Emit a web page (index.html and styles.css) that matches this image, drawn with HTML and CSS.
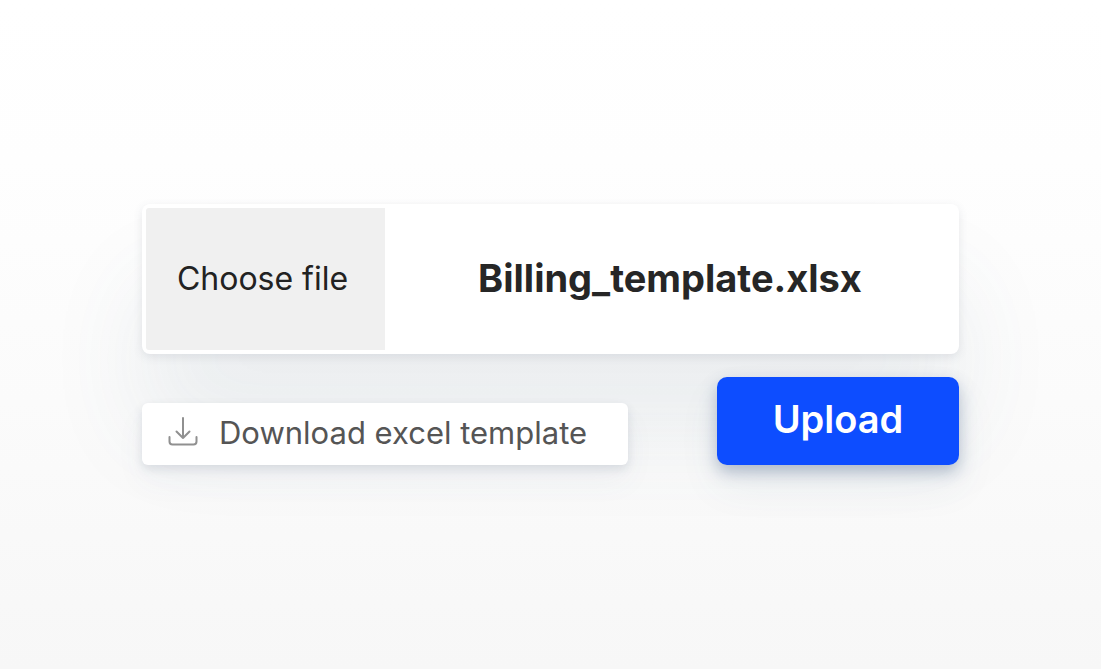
FILE: index.html
```html
<!DOCTYPE html>
<html lang="en">
<head>
<meta charset="utf-8">
<meta name="viewport" content="width=device-width, initial-scale=1">
<title>Upload billing file</title>
<link rel="stylesheet" href="styles.css">
</head>
<body>
<main class="page">
  <form class="uploader">
    <div class="file-field">
      <button class="choose" type="button">Choose file</button>
      <output class="file-name">Billing_template.xlsx</output>
    </div>
    <div class="actions">
      <a class="download" href="#template">
        <svg class="download-icon" viewBox="0 0 30 30" aria-hidden="true"><path d="M15 0v20M8.500 13.500l6.500 6.500 6.500-6.500M1.500 19v4.500q0 3 3 3h21q3 0 3-3v-4.500"/></svg>
        <span>Download excel template</span>
      </a>
      <button class="upload" type="submit">Upload</button>
    </div>
  </form>
</main>
</body>
</html>
```
FILE: styles.css
```css
* { box-sizing: border-box; }
body {
  margin: 0;
  font-family: Inter, "Liberation Sans", sans-serif;
  color: #262626;
}
.page {
  min-height: 100vh;
  padding: 204px 142px 40px;
  background: linear-gradient(#fff 0%, #fefefe 24%, #fbfbfb 60%, #f7f7f7 100%);
}
.uploader {
  display: flex;
  flex-direction: column;
  gap: 23px;
}
.file-field {
  display: flex;
  height: 150px;
  padding: 4px;
  border-radius: 8px;
  background: #fff;
  box-shadow: 0 3px 10px rgba(70, 85, 110, .12), 0 80px 100px rgba(70, 100, 120, .09);
}
.choose {
  width: 239px;
  padding: 0 6px 0 0;
  border: 0;
  border-radius: 3px 0 0 3px;
  background: #f0f0f0;
  color: #222;
  font: 400 32px/40px Inter, "Liberation Sans", sans-serif;
}
.file-name {
  flex: 1;
  align-self: center;
  padding-bottom: 2px;
  text-align: center;
  font-size: 38px;
  line-height: 46px;
  font-weight: 700;
}
.actions {
  display: flex;
  justify-content: space-between;
  align-items: flex-end;
}
.download {
  display: flex;
  align-items: center;
  gap: 21px;
  height: 62px;
  padding: 0 41px 2px 26px;
  border-radius: 6px;
  background: #fff;
  box-shadow: 0 4px 10px rgba(70, 85, 110, .14), 0 16px 30px rgba(70, 100, 130, .05);
  color: #555;
  font-size: 31px;
  line-height: 38px;
  text-decoration: none;
  white-space: nowrap;
}
.download-icon {
  width: 30px;
  height: 30px;
  overflow: visible;
  fill: none;
  stroke: #909090;
  stroke-width: 2;
  stroke-linecap: round;
  stroke-linejoin: round;
}
.upload {
  width: 242px;
  height: 88px;
  padding: 0 0 4px;
  border: 0;
  border-radius: 10px;
  background: #0d4dff;
  box-shadow: 0 7px 16px rgba(60, 85, 130, .34), 0 20px 40px rgba(70, 100, 130, .08);
  color: #fff;
  font: 600 38px/46px Inter, "Liberation Sans", sans-serif;
}
```
